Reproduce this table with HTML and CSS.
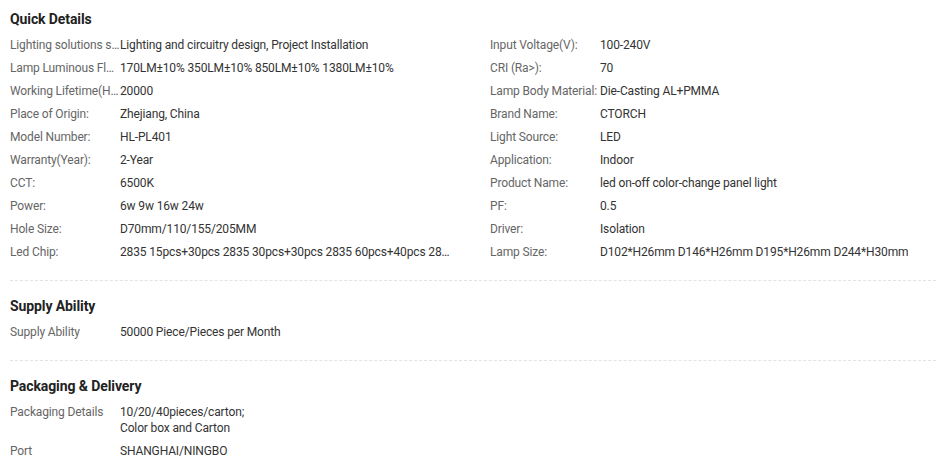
FILE: index.html
```html
<!DOCTYPE html>
<html>
<head>
    <title>Quick Details</title>
    <link rel="stylesheet" href="styles.css">
</head>
<body>
    <div class="details">
        <div class="section">
            <h3>Quick Details</h3>
            <div class="grid">
                <div class="col">
                    <div class="row"><span class="label">Lighting solutions service:</span><span class="value">Lighting and circuitry design, Project Installation</span></div>
                    <div class="row"><span class="label">Lamp Luminous Flux(lm):</span><span class="value">170LM±10% 350LM±10% 850LM±10% 1380LM±10%</span></div>
                    <div class="row"><span class="label">Working Lifetime(Hour):</span><span class="value">20000</span></div>
                    <div class="row"><span class="label">Place of Origin:</span><span class="value">Zhejiang, China</span></div>
                    <div class="row"><span class="label">Model Number:</span><span class="value">HL-PL401</span></div>
                    <div class="row"><span class="label">Warranty(Year):</span><span class="value">2-Year</span></div>
                    <div class="row"><span class="label">CCT:</span><span class="value">6500K</span></div>
                    <div class="row"><span class="label">Power:</span><span class="value">6w 9w 16w 24w</span></div>
                    <div class="row"><span class="label">Hole Size:</span><span class="value">D70mm/110/155/205MM</span></div>
                    <div class="row"><span class="label">Led Chip:</span><span class="value">2835 15pcs+30pcs 2835 30pcs+30pcs 2835 60pcs+40pcs 2835 90pcs+60pcs</span></div>
                </div>
                <div class="col">
                    <div class="row"><span class="label">Input Voltage(V):</span><span class="value">100-240V</span></div>
                    <div class="row"><span class="label">CRI (Ra&gt;):</span><span class="value">70</span></div>
                    <div class="row"><span class="label">Lamp Body Material:</span><span class="value">Die-Casting AL+PMMA</span></div>
                    <div class="row"><span class="label">Brand Name:</span><span class="value">CTORCH</span></div>
                    <div class="row"><span class="label">Light Source:</span><span class="value">LED</span></div>
                    <div class="row"><span class="label">Application:</span><span class="value">Indoor</span></div>
                    <div class="row"><span class="label">Product Name:</span><span class="value">led on-off color-change panel light</span></div>
                    <div class="row"><span class="label">PF:</span><span class="value">0.5</span></div>
                    <div class="row"><span class="label">Driver:</span><span class="value">Isolation</span></div>
                    <div class="row"><span class="label">Lamp Size:</span><span class="value">D102*H26mm D146*H26mm D195*H26mm D244*H30mm</span></div>
                </div>
            </div>
        </div>

        <div class="section">
            <h3>Supply Ability</h3>
            <div class="row"><span class="label">Supply Ability</span><span class="value">50000 Piece/Pieces per Month</span></div>
        </div>

        <div class="section last">
            <h3>Packaging &amp; Delivery</h3>
            <div class="row"><span class="label">Packaging Details</span><span class="value wrap">10/20/40pieces/carton;<br>Color box and Carton</span></div>
            <div class="row"><span class="label">Port</span><span class="value">SHANGHAI/NINGBO</span></div>
        </div>
    </div>
</body>
</html>
```

FILE: styles.css
```css
body { margin: 0; font-family: Roboto, "Liberation Sans", sans-serif; font-size: 12px; line-height: 16px; color: #333; background: #fff; }
.details { padding: 0 4px 0 10px; }
.section { padding: 16px 0 20px; border-bottom: 1px dashed #e3e3e3; }
.section:first-child { padding-top: 10px; }
.section.last { border-bottom: none; }
h3 { margin: 0 0 9px; font-size: 14px; line-height: 18px; font-weight: bold; color: #222; letter-spacing: -0.1px; }
.grid { display: grid; grid-template-columns: 480px 1fr; }
.col .row { padding-right: 40px; }
.row { display: flex; margin-bottom: 7px; letter-spacing: -0.14px; }
.row:last-child { margin-bottom: 0; }
.label { flex: 0 0 110px; width: 110px; color: #666; white-space: nowrap; overflow: hidden; text-overflow: ellipsis; }
.value { flex: 1; min-width: 0; white-space: nowrap; overflow: hidden; text-overflow: ellipsis; }
.value.wrap { white-space: normal; }
```
